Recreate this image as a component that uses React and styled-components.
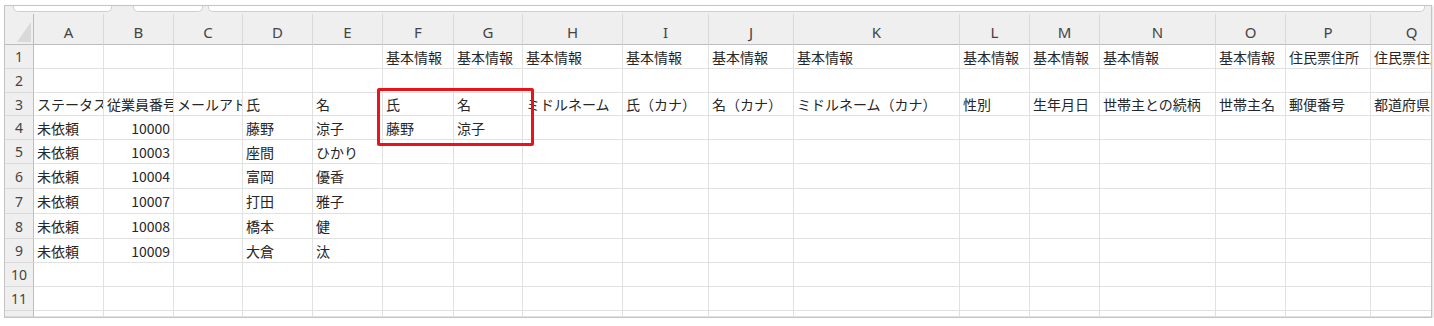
import styled, { createGlobalStyle } from "styled-components";

const GlobalStyle = createGlobalStyle`
    body {
        margin : 0;
        background : #ffffff;
        font-family : "Noto Sans CJK JP", "Noto Sans", sans-serif;
    }
`;

const columns = [
    { key : "A", w : 70 },
    { key : "B", w : 70 },
    { key : "C", w : 69 },
    { key : "D", w : 70 },
    { key : "E", w : 70 },
    { key : "F", w : 71 },
    { key : "G", w : 69 },
    { key : "H", w : 100 },
    { key : "I", w : 86 },
    { key : "J", w : 85 },
    { key : "K", w : 166 },
    { key : "L", w : 70 },
    { key : "M", w : 70 },
    { key : "N", w : 116 },
    { key : "O", w : 70 },
    { key : "P", w : 85 },
    { key : "Q", w : 82 },
];

const kihon = "基本情報";

const rows = [
    { h : 24, cells : { F : kihon, G : kihon, H : kihon, I : kihon, J : kihon, K : kihon, L : kihon, M : kihon, N : kihon, O : kihon, P : "住民票住所", Q : "住民票住所" } },
    { h : 24, cells : {} },
    { h : 23, cells : { A : "ステータス", B : "従業員番号", C : "メールアドレス", D : "氏", E : "名", F : "氏", G : "名", H : "ミドルネーム", I : "氏（カナ）", J : "名（カナ）", K : "ミドルネーム（カナ）", L : "性別", M : "生年月日", N : "世帯主との続柄", O : "世帯主名", P : "郵便番号", Q : "都道府県" } },
    { h : 24, cells : { A : "未依頼", B : 10000, D : "藤野", E : "涼子", F : "藤野", G : "涼子" } },
    { h : 24, cells : { A : "未依頼", B : 10003, D : "座間", E : "ひかり" } },
    { h : 25, cells : { A : "未依頼", B : 10004, D : "富岡", E : "優香" } },
    { h : 25, cells : { A : "未依頼", B : 10007, D : "打田", E : "雅子" } },
    { h : 25, cells : { A : "未依頼", B : 10008, D : "橋本", E : "健" } },
    { h : 24, cells : { A : "未依頼", B : 10009, D : "大倉", E : "汰" } },
    { h : 24, cells : {} },
    { h : 24, cells : {} },
    { h : 6, cells : {}, partial : true },
];

export default function App() {
    const colTemplate = ["29px", ...columns.map((c) => c.w + "px")].join(" ");
    const rowTemplate = ["31px", ...rows.map((r) => r.h + "px")].join(" ");

    return (
        <>
            <GlobalStyle />
            <Frame>
                <TopStrip>
                    <Tab $w={99} $gap={21} />
                    <Tab $w={70} $gap={5} />
                    <Tab $grow />
                </TopStrip>

                <Sheet $cols={colTemplate} $rows={rowTemplate}>
                    <Corner />
                    {columns.map((c) => (
                        <ColHead key={c.key}>{c.key}</ColHead>
                    ))}

                    {rows.map((r, i) => [
                        <RowHead key={"h" + i}>{r.partial ? "" : i + 1}</RowHead>,
                        ...columns.map((c) => {
                            const v = r.cells[c.key];
                            return (
                                <Cell key={i + c.key} $align={typeof v === "number" ? "right" : "left"}>
                                    {v}
                                </Cell>
                            );
                        }),
                    ])}
                </Sheet>

                <Highlight />
            </Frame>
        </>
    );
}

const Frame = styled.div`
    position : relative;
    box-sizing : border-box;
    width : 1428px;
    margin : 5px 0 0 4px;
    border : 1px solid #c4c4c4;
    background : #efefef;
    box-shadow : 1px 1px 2px rgba(0, 0, 0, 0.12);
    overflow : hidden;
`;

const TopStrip = styled.div`
    display : flex;
    height : 8px;
    padding : 0 6px 0 8px;
`;

const Tab = styled.div`
    box-sizing : border-box;
    width : ${(p) => (p.$w ? p.$w + "px" : "auto")};
    flex : ${(p) => (p.$grow ? "1" : "none")};
    height : 6px;
    margin-right : ${(p) => (p.$gap ?? 0) + "px"};
    background : #ffffff;
    border : 1px solid #cfcfcf;
    border-top : none;
    border-radius : 0 0 5px 5px;
`;

const Sheet = styled.div`
    display : grid;
    grid-template-columns : ${(p) => p.$cols};
    grid-template-rows : ${(p) => p.$rows};
    width : 1426px;
    overflow : hidden;
    font-size : 14px;
    color : #262626;
`;

const Corner = styled.div`
    position : relative;
    box-sizing : border-box;
    border-right : 1px solid #bdbdbd;
    border-bottom : 1px solid #bdbdbd;
    background : #efefef;

    &::after {
        content : "";
        position : absolute;
        right : 2px;
        bottom : 2px;
        width : 14px;
        height : 20px;
        background : #d9d9d9;
        clip-path : polygon(100% 0, 100% 100%, 0 100%);
    }
`;

const ColHead = styled.div`
    box-sizing : border-box;
    display : flex;
    align-items : center;
    justify-content : center;
    padding-top : 6px;
    border-right : 1px solid #d9d9d9;
    border-bottom : 1px solid #bdbdbd;
    background : #efefef;
    color : #444444;
    font-family : "Noto Sans", "Liberation Sans", sans-serif;
    font-size : 15px;
    white-space : nowrap;
`;

const RowHead = styled.div`
    box-sizing : border-box;
    display : flex;
    align-items : center;
    justify-content : center;
    border-right : 1px solid #bdbdbd;
    border-bottom : 1px solid #d9d9d9;
    background : #efefef;
    color : #444444;
    font-family : "Noto Sans", "Liberation Sans", sans-serif;
    font-size : 14px;
`;

const Cell = styled.div`
    box-sizing : border-box;
    display : flex;
    align-items : center;
    justify-content : ${(p) => (p.$align === "right" ? "flex-end" : "flex-start")};
    padding : 0 3px;
    border-right : 1px solid #e1e1e1;
    border-bottom : 1px solid #e1e1e1;
    background : #ffffff;
    white-space : nowrap;
    overflow : hidden;
`;

const Highlight = styled.div`
    position : absolute;
    left : 372px;
    top : 82px;
    box-sizing : border-box;
    width : 157px;
    height : 58px;
    border : 3px solid #e8141b;
    border-radius : 2px;
    pointer-events : none;
`;
